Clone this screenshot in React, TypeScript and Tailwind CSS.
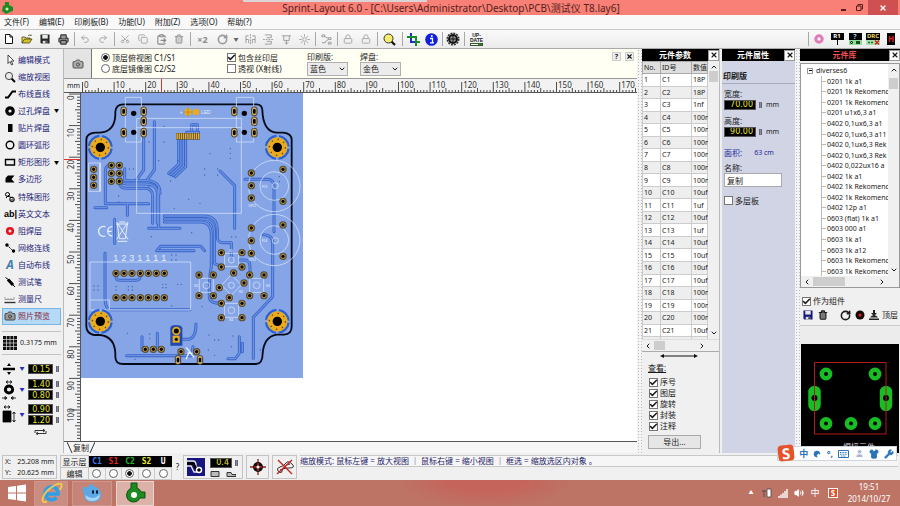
import type { ReactNode } from "react";
import {
  Camera,
  Check,
  ChevronDown,
  ChevronLeft,
  ChevronRight,
  ChevronUp,
  ClipboardPaste,
  Copy,
  Lock,
  Moon,
  Printer,
  Redo2,
  RotateCw,
  Scissors,
  Shirt,
  Trash2,
  Undo2,
  User,
  Volume2,
  Wrench,
  X,
} from "lucide-react";

const parts = [
  ["C1", "18P"],
  ["C2", "18P"],
  ["C3", "1nf"],
  ["C4", "100n"],
  ["C5", "100n"],
  ["C6", "100n"],
  ["C7", "100n"],
  ["C8", "100n"],
  ["C9", "100n"],
  ["C10", "10uf"],
  ["C11", "1uf"],
  ["C12", "10uf"],
  ["C13", "1uf"],
  ["C14", "10uf"],
  ["C15", "10uf"],
  ["C16", "10uf"],
  ["C17", "10uf"],
  ["C18", "100n"],
  ["C19", "100n"],
  ["C20", "100n"],
  ["C21", "10uf"],
  ["C22", "100n"],
];

const library = [
  "0201 1k a1",
  "0201 1k Rekomend",
  "0201 1k Rekomend",
  "0201 u1x6,3 a1",
  "0402 0,1ux6,3 a1",
  "0402 0,1ux6,3 a11",
  "0402 0,1ux6,3 Rek",
  "0402 0,1ux6,3 Rek",
  "0402 0,022ux16 a",
  "0402 1k a1",
  "0402 1k Rekomend",
  "0402 1k Rekomend",
  "0402 12p a1",
  "0603 (flat) 1k a1",
  "0603 000 a1",
  "0603 1k a1",
  "0603 1k a12",
  "0603 1k Rekomend",
  "0603 1k Rekomend",
  "0603 1k Rekomend",
];

const menus = ["文件(F)", "编辑(E)", "印刷板(B)", "功能(U)", "附加(Z)", "选项(O)", "帮助(?)"];

function Glyph({ children }: { children: ReactNode }) {
  return (
    <svg viewBox="0 0 12 12" className="h-3 w-3 shrink-0" fill="none" stroke="#000" strokeWidth="1.4">
      {children}
    </svg>
  );
}

const tools: { name: string; icon: ReactNode; menu?: boolean; active?: boolean }[] = [
  {
    name: "编辑模式",
    icon: <Glyph><path d="M4 1v8.500l2-2 1.500 3.500 1.300-.6L7.400 7H10z" fill="#fff" stroke="#333" strokeWidth=".9" /></Glyph>,
  },
  {
    name: "缩放视图",
    icon: (
      <Glyph>
        <circle cx="5" cy="5" r="3.6" stroke="#444" fill="#e8e8e8" strokeWidth="1" />
        <path d="M7.6 7.6 11 11" strokeWidth="2" />
      </Glyph>
    ),
  },
  { name: "布线直线", icon: <Glyph><path d="M1 9.500H4L8.500 3.500H12" strokeWidth="2" /></Glyph> },
  { name: "过孔焊盘", menu: true, icon: <Glyph><circle cx="6" cy="6" r="3.200" strokeWidth="3.200" /></Glyph> },
  { name: "贴片焊盘", icon: <Glyph><path d="M4 2h4.500v8H4z" fill="#000" stroke="none" /></Glyph> },
  { name: "圆环弧形", icon: <Glyph><circle cx="6" cy="6" r="3.800" /></Glyph> },
  { name: "矩形图形", menu: true, icon: <Glyph><path d="M1.500 3.500h9v5.500h-9z" /></Glyph> },
  { name: "多边形", icon: <Glyph><path d="M1.500 9.500V5L4 2.500h6.500L7.500 6l3 3.500z" fill="#000" stroke="none" /></Glyph> },
  {
    name: "特殊图形",
    icon: (
      <Glyph>
        <circle cx="3.5" cy="3.500" r="2" strokeWidth="1" />
        <path d="M3 5 9 7M2 7l4-4" strokeWidth="1" />
        <circle cx="8" cy="8.500" r="2.300" strokeWidth="1" />
        <path d="M6 9h4" strokeWidth="1" />
      </Glyph>
    ),
  },
  { name: "英文文本", icon: <span className="w-3 whitespace-nowrap font-[Liberation_Sans,sans-serif] text-[9px] font-bold leading-3 text-black">ab|</span> },
  { name: "阻焊层", icon: <Glyph><circle cx="6" cy="6" r="2.800" stroke="#e5111c" strokeWidth="2.600" /></Glyph> },
  {
    name: "网络连线",
    icon: (
      <Glyph>
        <path d="M3 3 9 9" strokeWidth="1" strokeDasharray="2 1" />
        <circle cx="3" cy="3" r="1" fill="#000" />
        <circle cx="9.500" cy="9" r="1" fill="#000" />
      </Glyph>
    ),
  },
  {
    name: "自动布线",
    icon: <span className="w-3 text-center text-[12px] font-bold italic leading-3 text-[#3f7fae]">A</span>,
  },
  {
    name: "测试笔",
    icon: (
      <Glyph>
        <path d="M1.500 1.500 5 4" strokeWidth="1" />
        <path d="M4 3.500 9 9" strokeWidth="3" />
        <path d="M9 9l2 2" strokeWidth="1" />
      </Glyph>
    ),
  },
  {
    name: "测量尺",
    icon: (
      <Glyph>
        <path d="M0.500 9.500h11" stroke="#333" />
        <path d="M1 6.500V4M4 6.500V5M7 6.500V5M10 6.500V4M1 6.500h9" stroke="#888" strokeWidth=".8" />
      </Glyph>
    ),
  },
  { name: "照片预览", active: true, icon: <Camera className="h-3 w-3" stroke="#444" fill="#999" /> },
];

function CheckBox({ label, checked, className }: { label: string; checked?: boolean; className?: string }) {
  return (
    <label className={"flex items-center gap-0.5 whitespace-nowrap " + (className ?? "")}>
      <span className="grid h-[9px] w-[9px] shrink-0">
        <input
          type="checkbox"
          defaultChecked={checked}
          className="peer col-start-1 row-start-1 h-[9px] w-[9px] appearance-none border border-[#777] bg-white"
        />
        <Check className="pointer-events-none invisible z-10 col-start-1 row-start-1 h-[9px] w-[9px] peer-checked:visible" strokeWidth={4} />
      </span>
      {label}
    </label>
  );
}

const radioClass =
  "h-[9px] w-[9px] shrink-0 appearance-none rounded-full border border-[#666] bg-white checked:bg-[radial-gradient(circle,#111_42%,#fff_50%)]";

function PickColor({ id, label, value }: { id: string; label: string; value: string }) {
  return (
    <div className="flex flex-col">
      <label htmlFor={id} className="leading-[11px]">{label}</label>
      <div className="grid w-[41px] items-center">
        <select
          id={id}
          className="col-start-1 row-start-1 h-[14px] appearance-none border border-[#b0b0b0] bg-[#ececec] pl-0.5 leading-3"
        >
          <option>{value}</option>
        </select>
        <ChevronDown className="pointer-events-none col-start-1 row-start-1 mr-0.5 h-2 w-2 justify-self-end" strokeWidth={3} />
      </div>
    </div>
  );
}

function Value({ label, value, className }: { label: string; value: string; className: string }) {
  return (
    <span className="flex items-center gap-[3px]">
      <input
        aria-label={label}
        defaultValue={value}
        className={"h-[10px] border border-[#555] bg-black pr-0.5 text-right font-[DejaVu_Sans,sans-serif] text-[8px] leading-none text-[#e6e62a] " + className}
      />
      <span className="h-[6px] w-[3px] border-x border-[#667] bg-[#889]" />
    </span>
  );
}

function PanelHead({ title, red }: { title: string; red?: boolean }) {
  return (
    <div className="flex h-3 shrink-0 items-center bg-black">
      <h2 className={"flex-1 text-center text-[8px] font-bold leading-none " + (red ? "text-[#f05050]" : "text-white")}>
        {title}
      </h2>
      <button aria-label={"关闭 " + title} className="grid h-[11px] w-[11px] place-items-center border border-[#999] bg-white">
        <X className="h-2 w-2" strokeWidth={3.5} />
      </button>
    </div>
  );
}

function VScroll({ thumb }: { thumb: string }) {
  return (
    <div className="flex w-[11px] shrink-0 flex-col items-center justify-between bg-[#f0f0f0] py-0.5">
      <ChevronUp className="h-2 w-2" strokeWidth={3} />
      <div className={"w-[9px] bg-[#cdcdcd] " + thumb} />
      <div className="flex-1" />
      <ChevronDown className="h-2 w-2" strokeWidth={3} />
    </div>
  );
}

function HScroll({ thumb }: { thumb: string }) {
  return (
    <div className="flex h-[11px] shrink-0 items-center gap-0.5 bg-[#f0f0f0] px-0.5 pr-[13px]">
      <ChevronLeft className="h-2 w-2" strokeWidth={3} />
      <div className={"h-[9px] bg-[#cdcdcd] " + thumb} />
      <div className="flex-1" />
      <ChevronRight className="h-2 w-2" strokeWidth={3} />
    </div>
  );
}

function Splitter() {
  return (
    <div className="w-[5px] shrink-0 bg-[#f4f4f4] bg-[radial-gradient(circle,#bbb_30%,transparent_35%)] bg-[size:3px_3px]" />
  );
}

function Sep() {
  return (
    <div className="flex w-1 justify-center">
      <div className="h-[14px] w-px bg-[#a8a8a8]" />
    </div>
  );
}

function Tool({ name, wide, children }: { name: string; wide?: boolean; children: ReactNode }) {
  return (
    <button aria-label={name} className={"grid h-[18px] place-items-center " + (wide ? "w-[21px]" : "w-[18px]")}>
      {children}
    </button>
  );
}

function Floppy({ color }: { color: string }) {
  return (
    <svg viewBox="0 0 11 11" className="h-[10px] w-[10px]">
      <path d="M0.500 0.500h10v10h-9l-1-1z" fill={color} />
      <path d="M2.500 1h6v4h-6z" fill="#e8e8e8" />
      <path d="M3 7.500h5v3H3z" fill="#ddd" />
      <path d="M6 8h1.500v2H6z" fill="#111" />
    </svg>
  );
}

function ToolBar() {
  const gray = { className: "h-[10px] w-[10px] text-[#aaa]", strokeWidth: 2.4 };
  return (
    <div className="flex h-[19px] shrink-0 items-center border-t border-[#c8c8c8] bg-[linear-gradient(#fafafa,#ebebeb)]">
      <Tool name="新建">
        <svg viewBox="0 0 10 10" className="h-[10px] w-[10px]" fill="#fff" stroke="#111">
          <path d="M1.500.5h4.500L8.500 3v6.500h-7zM6 .5V3h2.500" />
        </svg>
      </Tool>
      <Tool name="打开">
        <svg viewBox="0 0 12 10" className="h-[10px] w-3" stroke="#332f10" strokeWidth=".7">
          <path d="M1 9V3h3l1 1h4v1.500" fill="#eedc4a" />
          <path d="M1 9l2.500-4H11L8.500 9z" fill="#d3bf2b" />
          <path d="M7 2c1-1.500 2.500-1 3 0V.5" fill="none" />
        </svg>
      </Tool>
      <Tool name="保存"><Floppy color="#202a20" /></Tool>
      <Tool name="打印"><Printer className="h-[11px] w-[11px]" fill="#999" stroke="#333" strokeWidth={2.4} /></Tool>
      <Sep />
      <Tool name="撤销"><Undo2 {...gray} /></Tool>
      <Tool name="重做"><Redo2 {...gray} /></Tool>
      <Sep />
      <Tool name="剪切"><Scissors {...gray} className="h-[10px] w-[10px] -rotate-90 text-[#aaa]" /></Tool>
      <Tool name="复制"><Copy {...gray} /></Tool>
      <Tool name="粘贴"><ClipboardPaste {...gray} className="h-[11px] w-[11px] text-[#888]" /></Tool>
      <Tool name="删除"><Trash2 {...gray} className="h-[10px] w-[10px] text-[#999]" fill="#ccc" /></Tool>
      <Sep />
      <Tool name="克隆" wide><span className="text-[9px] font-bold leading-none text-[#8c8c8c]">×2</span></Tool>
      <Tool name="旋转"><RotateCw className="h-[11px] w-[11px] text-[#999]" strokeWidth={3.4} /></Tool>
      <button aria-label="旋转角度" className="w-[10px] text-[5px] leading-none text-[#666]">▼</button>
      <Tool name="水平镜像">
        <svg viewBox="0 0 12 12" className="h-[11px] w-[11px]" fill="none" stroke="#999">
          <path d="M6 0v12" strokeDasharray="2 1" />
          <path d="M4 2H1v8M1 6h3v4M8 2h3v8M11 6H8v4" />
        </svg>
      </Tool>
      <Tool name="垂直镜像">
        <svg viewBox="0 0 12 12" className="h-[11px] w-[11px]" fill="none" stroke="#999">
          <path d="M0 6h12" strokeDasharray="2 1" />
          <path d="M2 1h7v3H4M2 11h7V8H4" />
        </svg>
      </Tool>
      <Tool name="对齐">
        <svg viewBox="0 0 12 12" className="h-[11px] w-[11px]" fill="none" stroke="#999">
          <path d="M1 2h10M3 2v5h6V2M6 7v4M4 9l2 2 2-2" />
        </svg>
      </Tool>
      <Tool name="对准网格">
        <svg viewBox="0 0 12 12" className="h-[11px] w-[11px]" fill="none" stroke="#aaa">
          <circle cx="6" cy="6" r="2" />
          <path d="M6 0v3M6 9v3M0 6h3M9 6h3M2 2l2 2M8 8l2 2M10 2 8 4M4 8l-2 2" />
        </svg>
      </Tool>
      <Sep />
      <Tool name="连线">
        <svg viewBox="0 0 12 12" className="h-[11px] w-[11px]" fill="none" stroke="#999">
          <path d="M1 1h3v2H1zM4 2.500 8 5M8 4h3v2H8zM8 6 4 9M1 9.500h4M8 9h3v2H8z" />
        </svg>
      </Tool>
      <Sep />
      <Tool name="组合"><Lock {...gray} /></Tool>
      <Tool name="取消组合"><Lock {...gray} /></Tool>
      <Sep />
      <Tool name="查找" wide>
        <svg viewBox="0 0 13 13" className="h-[13px] w-[13px]">
          <path d="m8.500 8.500 3.500 3.500" stroke="#111" strokeWidth="2.200" />
          <circle cx="5.500" cy="5.500" r="4.500" fill="#f4ec6a" stroke="#333" />
        </svg>
      </Tool>
      <Sep />
      <Tool name="裁剪">
        <svg viewBox="0 0 13 13" className="h-[13px] w-[13px]" fill="none" strokeWidth="2">
          <path d="M4 0v9h6" stroke="#1b2fd0" />
          <path d="M0 4h9v5" stroke="#178a2a" />
          <path d="M9 9v4M9 9h4" stroke="#178a2a" />
        </svg>
      </Tool>
      <Tool name="信息">
        <svg viewBox="0 0 13 13" className="h-[13px] w-[13px]">
          <circle cx="6.500" cy="6.500" r="6.300" fill="#0d1fe0" />
          <path d="M5 5.500h2.500v4M5 9.800h4" stroke="#fff" strokeWidth="1.300" fill="none" />
          <circle cx="6.800" cy="3" r="1" fill="#fff" />
        </svg>
      </Tool>
      <Sep />
      <Tool name="焊盘">
        <svg viewBox="0 0 14 14" className="h-[14px] w-[14px]">
          <circle cx="7" cy="7" r="5" fill="#111" />
          <circle cx="7" cy="7" r="5.800" fill="none" stroke="#333" strokeWidth="1.500" strokeDasharray="2 1" />
          <circle cx="7" cy="7" r="3" fill="#999" />
          <path d="M7 3v8M3 7h8" stroke="#111" />
        </svg>
      </Tool>
      <Sep />
      <Tool name="更新" wide>
        <span className="flex flex-col text-center font-[Liberation_Sans,sans-serif] text-[5px] font-bold">
          <span className="leading-[5px]">UP-</span>
          <span className="leading-[5px]">DATE</span>
          <span className="h-[3px] border border-[#35562f] bg-[linear-gradient(90deg,#fff_60%,#2f8a2a_60%)]" />
        </span>
      </Tool>
      <div className="flex-1" />
      <Sep />
      <Tool name="焊环">
        <svg viewBox="0 0 10 10" className="h-[10px] w-[10px]">
          <circle cx="5" cy="5" r="3.200" fill="none" stroke="#e07ab8" strokeWidth="3" />
        </svg>
      </Tool>
      <Tool name="元件">
        <span className="flex flex-col items-center">
          <span className="w-[13px] bg-black text-[6px] font-bold leading-[7px] text-white">R1</span>
          <span className="h-[5px] border-l border-dashed border-black" />
        </span>
      </Tool>
      <Tool name="属性">
        <span className="w-[13px] bg-black text-[7px] font-bold leading-[7px] text-[#9fd0ff]">
          ?
          <span className="flex h-[5px] items-center justify-around bg-[#8fdc9a]">
            <span className="h-[3px] w-[3px] rounded-full border border-black" />
            <span className="h-[3px] w-1 bg-[#174d1f]" />
          </span>
        </span>
      </Tool>
      <Tool name="设计检查">
        <span className="w-[14px] bg-black text-[6px] font-bold leading-[7px] text-[#f1d86a]">
          DRC
          <svg viewBox="0 0 14 5" className="block h-[5px] w-[14px] bg-[#a9dfae]">
            <path d="M2 2.500h2M5 2.500h2" stroke="#1d6b28" strokeWidth="1.600" />
            <path d="M9 .5l4 4M13 .5l-4 4" stroke="#d01818" strokeWidth="1.200" />
          </svg>
        </span>
      </Tool>
      <Tool name="宏库">
        <span className="h-3 w-2 bg-black text-[8px] font-bold leading-3 text-[#e02020]">H</span>
      </Tool>
    </div>
  );
}

const TICK = 3.16;

function RulerX() {
  return (
    <svg className="h-full min-w-0 flex-1" stroke="#222">
      {Array.from({ length: 176 }, (_, i) => (
        <path key={i} d={`M${2.5 + i * TICK} 14V${i % 10 === 0 ? 3 : i % 5 === 0 ? 9 : 11}`} strokeWidth=".8" />
      ))}
      {Array.from({ length: 18 }, (_, i) => (
        <text key={i} x={4 + i * 10 * TICK} y="9" fontSize="8" fill="#333" stroke="none" fontFamily="Noto Sans">
          {i * 10}
        </text>
      ))}
      <path d="M81.500 0v14" stroke="#d33" />
    </svg>
  );
}

function RulerY() {
  return (
    <svg className="h-full w-4 shrink-0 bg-[#f2f2f2]" stroke="#222">
      {Array.from({ length: 110 }, (_, i) => (
        <path key={i} d={`M16 ${1 + i * TICK}H${i % 10 === 0 ? 5 : i % 5 === 0 ? 11 : 13}`} strokeWidth=".8" />
      ))}
      {Array.from({ length: 11 }, (_, i) => (
        <text
          key={i}
          transform={`translate(10 ${i === 0 ? 7 : 13 + i * 10 * TICK}) rotate(-90)`}
          fontSize="8"
          fill="#333"
          stroke="none"
          fontFamily="Noto Sans"
        >
          {i * 10}
        </text>
      ))}
      <path d="M0 66.500h16" stroke="#d33" />
    </svg>
  );
}

// copper tracks, three drawing units per screen pixel
const tracks = [
  "M191 140V240L168 272",
  "M223 95V240L200 272",
  "M296 148V222L266 250M303 148V226L272 254M310 148V228L279 257M317 148V230L286 260",
  "M335 122V104H352V122M320 127H356",
  "M420 243 464 287V415",
  "M495 268H560Q582 268 582 290V425",
  "M92 226Q76 226 76 245V341H206M142 344V376M45 353H80",
  "M118 250Q118 282 140 282H196Q232 282 232 310V400",
  "M134 236V270Q134 272 144 272H205Q240 276 240 310M118 262V274Q118 295 140 295H196Q218 295 218 320V400",
  "M236 290V414M206 415H300",
  "M253 378H370Q412 378 412 420V440Q412 458 430 458H454V500M253 387H366Q403 387 403 426V520L423 530",
  "M253 396H360Q394 396 394 434V530Q388 560 388 600V620Q388 640 424 640",
  "M104 388V460M75 490V620Q75 658 92 659H330",
  "M230 482 242 469H362L374 482M230 482H330L342 482",
  "M108 550V560Q108 571 122 571H168Q182 571 182 550",
  "M550 434Q578 434 578 460V620L520 682V805",
  "M480 510H494Q510 510 510 530V554",
  "M140 797H335L339 770M186 740V780M232 730V778M305 748H325Q348 745 348 702",
  "M478 740V790L466 806H444M487 760V785",
];

const vias = [
  [94, 226], [118, 226], [94, 250], [118, 250], [94, 274], [118, 274],
  [41, 238], [41, 262], [41, 286],
  [514, 249], [514, 287], [514, 324], [609, 238], [609, 334],
  [514, 414], [514, 452], [514, 490], [609, 405], [609, 499],
  [108, 550], [132, 550], [156, 550], [181, 550], [205, 550], [229, 550], [253, 550],
  [108, 623], [132, 623], [156, 623], [181, 623], [205, 623], [229, 623], [253, 623],
  [424, 488], [486, 488], [424, 531], [486, 531], [357, 555], [400, 555], [357, 617], [400, 617],
  [509, 555], [552, 555], [509, 617], [552, 617], [424, 640], [486, 640], [424, 683], [486, 683],
  [461, 549], [492, 579], [418, 593], [448, 623],
  [196, 778], [220, 778], [244, 778], [303, 785], [350, 785],
];

const slots = [
  [131, 64], [191, 64], [191, 94], [131, 128], [191, 128],
  [463, 64], [523, 64], [523, 94], [463, 128], [523, 128],
  [294, 810], [360, 810],
];

const dots = [
  [252, 109], [207, 156], [252, 156], [236, 212], [294, 212], [390, 191], [451, 176], [451, 190], [451, 205],
  [374, 237], [374, 255], [413, 237], [413, 255], [148, 237], [160, 237], [207, 290], [272, 273], [116, 318],
  [116, 336], [283, 355], [326, 328], [360, 340], [598, 260], [598, 275], [214, 440], [335, 428], [275, 495],
  [288, 495], [275, 510], [288, 510], [108, 590], [108, 600], [145, 590], [157, 590], [145, 600], [157, 600],
  [248, 583], [258, 583], [248, 593], [258, 593], [294, 583], [304, 583], [42, 588], [54, 588], [42, 600], [54, 600],
  [275, 648], [366, 650], [142, 730], [209, 732], [209, 745], [387, 735], [404, 750], [416, 750], [459, 738],
  [404, 796], [454, 770], [541, 780], [455, 441], [468, 441], [385, 780], [165, 808],
];

const holes = [[61, 172], [592, 172], [61, 694], [592, 694]];

function Board() {
  return (
    <svg viewBox="3 9 666 855" className="block h-[285px] w-[222px] bg-[#86a5e6]" fill="none">
      <g stroke="#3866cb" strokeWidth="9" strokeLinecap="round" strokeLinejoin="round">
        {tracks.map((d) => <path key={d} d={d} />)}
      </g>
      <g stroke="#6b90df" strokeWidth="4" strokeLinecap="round" strokeLinejoin="round">
        {tracks.map((d) => <path key={d} d={d} />)}
      </g>
      {dots.map(([x, y]) => <circle key={x + "-" + y} cx={x} cy={y} r="2" fill="#3d5faf" />)}
      <path
        d="M130 43H530Q546 43 547 60Q549 125 590 128H610Q635 130 635 150V710Q635 732 612 734H590Q552 740 548 790Q548 822 528 822H130Q106 822 106 800V790Q104 740 60 735H42Q19 730 19 708V150Q19 130 45 128H60Q104 125 106 75V65Q108 43 130 43Z"
        stroke="#050a18"
        strokeWidth="5.500"
      />
      <g stroke="#cfdcf8" strokeWidth="2.500">
        <path d="M136 22H184V156H136ZM469 22H521V156H469ZM170 85H484V370H170ZM170 113H484M26 219H62V304H26Z" />
        <path d="M60 219V304" strokeWidth="6" />
        <path d="M30 516H332V660H30ZM30 630H88V660" />
        <circle cx="583" cy="288" r="77" />
        <circle cx="583" cy="288" r="43" />
        <circle cx="586" cy="287" r="9" />
        <circle cx="583" cy="450" r="77" />
        <circle cx="583" cy="450" r="43" />
        <circle cx="586" cy="452" r="9" />
        <path d="M434 490H476V530H434ZM358 565H400V607H358ZM509 565H551V607H509ZM434 640H476V682H434ZM454 554 484 585 454 616 425 585Z" />
        <circle cx="454" cy="510" r="9" />
        <circle cx="379" cy="586" r="10" />
        <circle cx="530" cy="586" r="10" />
        <circle cx="454" cy="661" r="10" />
        <circle cx="454" cy="586" r="9" />
      </g>
      <g stroke="#e8effc" strokeWidth="4">
        <path d="M76 410A15 15 0 1 0 76 438M97 410A14 14 0 1 0 97 438M82 424H95" />
        <path d="M108 402H145M112 402 118 446H136L142 402M110 396 144 448M144 396 110 448M118 396H136M112 454H142" strokeWidth="3" />
        <path d="M318 772 334 790M318 808 328 785 342 802M322 790H338" />
      </g>
      <g fill="#e8effc" fontFamily="Liberation Sans">
        {["1", "2", "3", "1", "1", "1", "1"].map((n, i) => (
          <text key={i} x={100 + i * 24} y="513" fontSize="27">{n}</text>
        ))}
        <text x="364" y="72" fontSize="14">LED</text>
        <text x="299" y="71" fontSize="14">+</text>
        <text x="505" y="350" fontSize="12">VR2</text>
        <text x="505" y="513" fontSize="12">VR1</text>
        <text x="546" y="293" fontSize="12">R3</text>
        <text x="546" y="456" fontSize="12">R4</text>
        <text x="446" y="486" fontSize="11">S1</text>
        <text x="342" y="590" fontSize="11">S2</text>
        <text x="557" y="590" fontSize="11">S3</text>
        <text x="476" y="610" fontSize="11">S5</text>
        <text x="446" y="694" fontSize="11">S4</text>
      </g>
      {holes.map(([x, y]) => (
        <g key={x + "-" + y}>
          <circle cx={x} cy={y} r="34" stroke="#2c60cf" strokeWidth="7" strokeDasharray="46 7.400" strokeDashoffset="-3.700" />
          <circle cx={x} cy={y} r="21" stroke="#e9aa1e" strokeWidth="19" />
          <circle cx={x} cy={y} r="24" stroke="#5c4314" strokeWidth="4" strokeDasharray="4 14.850" />
          <circle cx={x} cy={y} r="14" fill="#000" />
        </g>
      ))}
      {vias.map(([x, y]) => (
        <g key={x + "-" + y}>
          <circle cx={x} cy={y} r="9" fill="#060606" stroke="#54503a" strokeWidth="4" />
          <circle cx={x} cy={y} r="6.500" stroke="#c69a45" strokeWidth="3" />
        </g>
      ))}
      {slots.map(([x, y]) => (
        <g key={x + "-" + y}>
          <rect x={x - 8} y={y - 13} width="16" height="26" rx="6" fill="#d9b264" stroke="#41402f" strokeWidth="3" />
          <rect x={x - 4} y={y - 7} width="8" height="14" rx="3" fill="#000" />
        </g>
      ))}
      <g fill="#050505">
        <circle cx="161" cy="70" r="8" />
        <circle cx="161" cy="127" r="8" />
        <circle cx="493" cy="70" r="8" />
        <circle cx="493" cy="127" r="8" />
      </g>
      <g fill="#e9aa1e">
        <circle cx="324" cy="66" r="11" />
        <circle cx="348" cy="66" r="10" />
      </g>
      <path d="M324 52v28M310 66h28" stroke="#b9851a" strokeWidth="2" />
      <path d="M288 139H360" stroke="#3c3b33" strokeWidth="20" />
      <path d="M289 139H360" stroke="#e0ad3a" strokeWidth="18" strokeDasharray="4.500 2" />
      <path d="M271 767V715Q271 705 288 705T307 715V767Z" fill="#2149a9" />
      <circle cx="289" cy="723" r="10" fill="#000" stroke="#e9aa1e" strokeWidth="5" />
      <path d="M278 737h21v21h-21z" fill="#e9aa1e" />
      <circle cx="289" cy="748" r="5" fill="#000" />
    </svg>
  );
}

function SideBar() {
  return (
    <aside className="flex w-16 shrink-0 flex-col border-r border-[#bbb] px-0.5 pt-0.5">
      <nav className="flex flex-1 flex-col">
        {tools.map((t) => (
          <button
            key={t.name}
            className={
              "flex flex-1 items-center gap-[2px] border px-px leading-none " +
              (t.active ? "border-[#7ab6e4] bg-[#b5daf5] text-[#8a1c40]" : "border-transparent text-[#1d1c7a]")
            }
          >
            <span className="flex w-3 justify-center">{t.icon}</span>
            <span className="flex-1 text-left">{t.name}</span>
            {t.menu && <span className="text-[5px] text-black">▼</span>}
          </button>
        ))}
      </nav>
      <div className="mt-1.5 flex h-6 shrink-0 items-center gap-0.5 border-y border-[#c4c4c4]">
        <svg viewBox="0 0 14 14" className="mx-px h-[14px] w-[14px]">
          <path d="M0 0h14v14H0z" fill="#111" />
          <path d="M0 3.500h14M0 7h14M0 10.500h14M3.500 0v14M7 0v14M10.500 0v14" stroke="#ddd" strokeWidth=".7" />
        </svg>
        <span className="whitespace-nowrap text-[7px]">0.3175 mm</span>
      </div>
      <div className="flex h-[98px] shrink-0 flex-col gap-1 pt-2">
        <div className="flex items-center">
          <svg viewBox="0 0 14 12" className="h-3 w-[14px] shrink-0">
            <path d="M1 6h12" stroke="#000" strokeWidth="2.500" />
            <path d="M7 0 5 3h4zM7 12 5 9h4z" fill="#000" />
          </svg>
          <span className="flex-1 text-center text-[5px] text-[#2a2ac0]">▼</span>
          <Value label="线宽" value="0.15" className="w-[25px]" />
          <span className="w-0.5" />
        </div>
        <div className="flex items-center">
          <svg viewBox="0 0 14 20" className="h-5 w-[14px] shrink-0" fill="none" stroke="#000">
            <path d="M4 2h6M4 2l2-1.500M4 2l2 1.500M10 2 8 .5M10 2 8 3.500" strokeWidth=".8" />
            <circle cx="7" cy="9.500" r="3.600" strokeWidth="3" />
            <path d="M0 18h5M9 18h5M5 18l-2-1.500v3zM9 18l2-1.500v3z" strokeWidth=".8" />
          </svg>
          <span className="flex-1 text-center text-[5px] text-[#2a2ac0]">▼</span>
          <span className="flex flex-col gap-px">
            <Value label="焊盘外径" value="1.40" className="w-[25px]" />
            <Value label="焊盘孔径" value="0.80" className="w-[25px]" />
          </span>
          <span className="w-0.5" />
        </div>
        <div className="flex items-center">
          <svg viewBox="0 0 14 20" className="h-5 w-[14px] shrink-0" fill="none" stroke="#000" strokeWidth=".8">
            <path d="M2 2h6M2 2l2-1.500M2 2l2 1.500M8 2 6 .5M8 2 6 3.500M12 7v10M12 7l-1.500 2M12 7l1.500 2M12 17l-1.500-2M12 17l1.500-2" />
            <path d="M1 6h8v11H1z" fill="#000" />
          </svg>
          <span className="flex-1 text-center text-[5px] text-[#2a2ac0]">▼</span>
          <span className="flex flex-col gap-px">
            <Value label="贴片宽" value="0.90" className="w-[25px]" />
            <Value label="贴片高" value="1.20" className="w-[25px]" />
          </span>
          <span className="w-0.5" />
        </div>
        <button aria-label="交换" className="mr-[14px] self-end">
          <svg viewBox="0 0 13 6" className="h-1.5 w-[13px]" fill="none" stroke="#222">
            <path d="M1 4V1.500h9M9 0l2 1.500L9 3M12 2v2.500H3M4 3 2 4.500 4 6" strokeWidth=".9" />
          </svg>
        </button>
      </div>
    </aside>
  );
}

function Workspace() {
  return (
    <main className="flex min-w-0 flex-1 flex-col">
      <div className="flex h-[30px] shrink-0 border-b border-[#999] bg-[#fffff4]">
        <div className="grid w-7 place-items-center border-r border-[#777] bg-[#e4e4e4]">
          <Camera className="h-3 w-3" stroke="#555" fill="#aaa" />
        </div>
        <div className="flex flex-1 pl-[9px] pt-1">
          <div className="flex w-[126px] flex-col gap-0.5 leading-[9px]">
            <label className="flex items-center gap-0.5"><input type="radio" name="side" defaultChecked className={radioClass} />顶层俯视图 C1/S1</label>
            <label className="flex items-center gap-0.5"><input type="radio" name="side" className={radioClass} />底层镜像图 C2/S2</label>
          </div>
          <div className="flex w-20 flex-col gap-0.5 leading-[9px]">
            <CheckBox label="包含丝印层" checked />
            <CheckBox label="透视 (X射线)" />
          </div>
          <div className="-mt-0.5 flex gap-3">
            <PickColor id="board-color" label="印刷版:" value="蓝色" />
            <PickColor id="pad-color" label="焊盘:" value="金色" />
          </div>
        </div>
        <div className="flex gap-1 p-[3px]">
          <button aria-label="帮助" className="h-[9px] w-[9px] border border-[#ccc] bg-[#eee] text-[7px] font-bold leading-[7px]">?</button>
          <button aria-label="关闭" className="grid h-[9px] w-[9px] place-items-center border border-[#ccc] bg-[#eee]">
            <X className="h-[7px] w-[7px]" strokeWidth={4} />
          </button>
        </div>
      </div>
      <div className="flex h-[14px] shrink-0 border-b border-[#555] bg-[#f2f2f2]">
        <span className="w-4 shrink-0 pl-[3px] text-[7px] leading-[14px]">mm</span>
        <RulerX />
      </div>
      <div className="flex min-h-0 flex-1 overflow-hidden">
        <RulerY />
        <div className="min-w-0 flex-1 overflow-hidden border-l border-[#555] bg-white">
          <Board />
        </div>
      </div>
      <div className="flex h-3 shrink-0 border-t border-[#555] bg-[#f6f6f6] pl-[3px]">
        <svg viewBox="0 0 6 11" className="h-[11px] w-1.5"><path d="M0 0l5 11" stroke="#333" /></svg>
        <button className="leading-[11px]">复制</button>
        <svg viewBox="0 0 6 11" className="h-[11px] w-1.5"><path d="M6 0 1 11" stroke="#333" /></svg>
      </div>
    </main>
  );
}

function PartsPanel() {
  return (
    <section className="flex w-[78px] shrink-0 flex-col border-r border-[#bbb]">
      <PanelHead title="元件参数" />
      <div className="flex min-h-0 flex-1 border-b border-[#ddd]">
        <div className="min-w-0 flex-1 overflow-hidden bg-white">
          <table className="h-[289px] w-full table-fixed border-collapse text-left text-[7px] leading-[11px]">
            <thead>
              <tr className="bg-[#dedede]">
                <th className="w-[18px] border border-[#aaa] p-0 pl-px font-normal">No.</th>
                <th className="w-[31px] border border-[#aaa] p-0 pl-px font-normal">ID号</th>
                <th className="whitespace-nowrap border border-[#aaa] p-0 pl-px font-normal">数值</th>
              </tr>
            </thead>
            <tbody>
              {parts.map(([id, value], i) => (
                <tr key={id} className="even:bg-[#eee]">
                  <td className="border border-[#ccc] p-0 pl-px">{i + 1}</td>
                  <td className="border border-[#ccc] p-0 pl-px">{id}</td>
                  <td className="border border-[#ccc] p-0 pl-px">{value}</td>
                </tr>
              ))}
            </tbody>
          </table>
        </div>
        <VScroll thumb="h-[11px]" />
      </div>
      <HScroll thumb="w-[11px]" />
      <div className="flex h-[102px] shrink-0 flex-col border-t border-[#aaa] pl-1.5 pr-[18px]">
        <svg viewBox="0 0 38 8" className="ml-3 h-2 w-[38px]">
          <path d="M2 4h34" stroke="#111" />
          <path d="M0 4l4-2v4zM38 4l-4-2v4z" fill="#111" />
        </svg>
        <span className="mb-1 mt-0.5 leading-[11px] underline">查看:</span>
        <div className="flex flex-col gap-px pl-px leading-[10px]">
          {["序号", "图层", "旋转", "封装", "注释"].map((name) => <CheckBox key={name} label={name} checked />)}
        </div>
        <button className="mt-1 h-[14px] border border-[#aaa] bg-[#e6e6e6] leading-3">导出...</button>
      </div>
    </section>
  );
}

function PropsPanel() {
  return (
    <section className="ml-0.5 flex w-[73px] shrink-0 flex-col bg-[#d0d4e4]">
      <PanelHead title="元件属性" />
      <h3 className="mt-[9px] border-b border-[#a6abc0] pb-0.5 pl-px font-bold leading-[11px]">印刷版</h3>
      <div className="flex flex-col items-start pl-0.5 pt-1 leading-[11px]">
        <span>宽度:</span>
        <span className="flex items-center gap-1 text-[7px]"><Value label="宽度" value="70.00" className="w-8" />mm</span>
        <span className="mt-[5px]">高度:</span>
        <span className="flex items-center gap-1 text-[7px]"><Value label="高度" value="90.00" className="w-8" />mm</span>
        <span className="mt-2.5 flex gap-3 text-[#26269a]"><span>面积:</span><span className="text-[7px]">63 cm</span></span>
        <label htmlFor="board-name" className="mt-1">名称:</label>
        <input id="board-name" defaultValue="复制" className="h-[14px] w-[58px] border border-[#aaa] bg-white px-0.5 leading-3" />
        <CheckBox label="多层板" className="mt-2" />
      </div>
    </section>
  );
}

function LibraryPanel() {
  return (
    <section className="flex w-[100px] shrink-0 flex-col">
      <PanelHead title="元件库" red />
      <div className="mt-0.5 flex min-h-0 flex-1 border border-b-0 border-[#999] bg-white">
        <div className="min-w-0 flex-1 overflow-hidden">
          <div className="flex h-[223px] flex-col pl-1.5 pt-px text-[7px]">
            <span className="flex h-[11px] shrink-0 items-center gap-[3px] leading-none">
              <span className="grid h-1.5 w-1.5 place-items-center border border-[#999]"><span className="h-px w-[3px] bg-black" /></span>
              diverses6
            </span>
            <ul className="ml-[14px] flex flex-1 flex-col border-l border-[#bbb]">
              {library.map((name, i) => (
                <li key={i} className="flex flex-1 items-center gap-px whitespace-nowrap leading-none">
                  <span className="h-px w-1 shrink-0 bg-[#bbb]" />
                  {name}
                </li>
              ))}
            </ul>
          </div>
        </div>
        <VScroll thumb="mt-1 h-[11px]" />
      </div>
      <div className="border border-t-0 border-[#999]"><HScroll thumb="w-8" /></div>
      <CheckBox label="作为组件" checked className="ml-0.5 mt-2 leading-[10px]" />
      <div className="mt-px flex h-4 shrink-0 items-center whitespace-nowrap pl-[3px]">
        <button aria-label="保存元件"><Floppy color="#16167c" /></button>
        <button aria-label="删除元件" className="ml-[5px]"><Trash2 className="h-[10px] w-[10px]" fill="#777" strokeWidth={2.6} /></button>
        <button aria-label="旋转元件" className="ml-3"><RotateCw className="h-[11px] w-[11px]" strokeWidth={3.4} /></button>
        <button aria-label="焊盘颜色" className="ml-1">
          <svg viewBox="0 0 10 10" className="h-[10px] w-[10px]"><circle cx="5" cy="5" r="4.500" fill="#150505" /><circle cx="5" cy="5" r="1.500" fill="#e02020" /></svg>
        </button>
        <button className="ml-1 flex items-center gap-[3px]">
          <svg viewBox="0 0 10 10" className="h-[10px] w-[10px]"><path d="M4 0h2v3h2L5 6 2 3h2zM3 5.500h4l2 2H1zM0 8.500h10V10H0z" fill="#222" /></svg>
          顶层
        </button>
      </div>
      <div className="mt-0.5 h-[19px] shrink-0 border-t border-[#ccc] bg-[#ececec]" />
      <div className="mx-px h-[109px] shrink-0 bg-black">
        <svg viewBox="0 0 98 109" className="h-full w-full" fill="none">
          <g stroke="#17bd22" strokeWidth="4.400">
            <circle cx="25" cy="30" r="4.200" />
            <circle cx="74" cy="30" r="4.200" />
            <circle cx="25" cy="79.500" r="4.200" />
            <circle cx="50" cy="79.500" r="4.200" />
            <circle cx="74" cy="79.500" r="4.200" />
          </g>
          <path d="M13.500 48v13M85 48v13" stroke="#17bd22" strokeWidth="12.500" strokeLinecap="round" />
          <circle cx="13.500" cy="54" r="3" fill="#000" />
          <circle cx="85" cy="54" r="3" fill="#000" />
          <path d="M13.500 18.500H85V90H13.500Z" stroke="#b01c1c" />
          <text x="58" y="106" fontSize="8" fill="#ddd" textAnchor="middle">焊接元件</text>
        </svg>
      </div>
    </section>
  );
}

const layers = [
  ["C1", "text-[#3d7df0]"],
  ["S1", "text-[#e02828]"],
  ["C2", "text-[#28b432]"],
  ["S2", "text-[#ecec2c]"],
  ["U", "text-white"],
];

function StatusBar() {
  return (
    <footer className="flex h-[27px] shrink-0 items-stretch gap-[3px] bg-[#f0f0f0] px-0.5 pb-px pt-0.5">
      <div className="flex w-[55px] flex-col justify-around border border-[#c4c4c4] px-0.5 text-[7px] leading-[11px]">
        <span className="flex justify-between"><span>X:</span><span>25.208 mm</span></span>
        <span className="flex justify-between"><span>Y:</span><span>20.625 mm</span></span>
      </div>
      <table className="w-[112px] table-fixed border-collapse text-center leading-[11px]">
        <tbody>
          <tr>
            <th className="w-7 border border-[#c4c4c4] p-0 font-normal">显示层</th>
            {layers.map(([name, color]) => (
              <th key={name} className={"bg-black p-0 font-[DejaVu_Sans_Mono,monospace] text-[8px] font-bold " + color}>{name}</th>
            ))}
          </tr>
          <tr>
            <th className="border border-[#c4c4c4] p-0 font-normal">编辑</th>
            {layers.map(([name]) => (
              <td key={name} className="border border-[#ccc] p-0">
                <input type="radio" name="layer" aria-label={name} defaultChecked={name === "C2"} className={radioClass + " mx-auto block"} />
              </td>
            ))}
          </tr>
        </tbody>
      </table>
      <button className="w-[5px] text-[8px]">?</button>
      <div className="flex w-[60px] items-center gap-[5px] border border-[#c4c4c4] px-[3px]">
        <svg viewBox="0 0 18 18" className="h-[18px] w-[18px] shrink-0" fill="none">
          <path d="M0 0h18v18H0z" fill="#16167c" />
          <path d="M0 3h6q3 0 3 4v1l2 3M0 8h4l3 6h3" stroke="#e8e8e8" strokeWidth="1.400" />
          <path d="M0 5.500h6l4 6" stroke="#000" strokeWidth="2.500" />
          <circle cx="12" cy="12" r="2.500" fill="#000" stroke="#fff" strokeWidth="1.400" />
        </svg>
        <div className="flex flex-col gap-[3px]">
          <Value label="间距" value="0.4" className="w-[22px]" />
          <svg viewBox="0 0 26 6" className="h-1.5 w-[26px]">
            <path d="M1 .5h8v5H1zM17 5.500V1.500h4l1 2h4v2z" fill="#bbb" stroke="#333" />
          </svg>
        </div>
      </div>
      <button aria-label="原点" className="grid w-[23px] place-items-center border border-[#c4c4c4]">
        <svg viewBox="0 0 16 16" className="h-4 w-4" fill="none">
          <path d="M8 0v16M0 8h16" stroke="#8c2020" strokeWidth="1.300" />
          <circle cx="8" cy="8" r="5" fill="#111" />
          <path d="M8 4v8M4 8h8" stroke="#c02020" strokeWidth="1.600" />
          <circle cx="8" cy="8" r="1.600" fill="#f0f0f0" />
        </svg>
      </button>
      <button aria-label="关闭连线" className="grid w-[25px] place-items-center border border-[#c4c4c4]">
        <svg viewBox="0 0 18 16" className="h-4 w-[18px]" fill="none">
          <path d="M2 12q-2-3 2-4t6-4 6 1-3 4-7 3-4 0M4 11q3 0 5-3t5-3" stroke="#333" />
          <path d="M2 1l14 14M16 1 1 15" stroke="#c82020" strokeWidth="1.400" />
        </svg>
      </button>
      <p className="h-3 flex-1 whitespace-nowrap border-y border-[#c8c8c8] bg-[#f6f6f6] leading-[10px] text-[#1d1c6a]">
        缩放模式: 鼠标左键 = 放大视图 ｜ 鼠标右键 = 缩小视图 ｜ 框选 = 缩放选区内对象 。
      </p>
    </footer>
  );
}

function TaskBar() {
  return (
    <div className="flex h-[26px] shrink-0 items-center bg-[#bd7465] bg-[radial-gradient(ellipse_90px_28px_at_54%_0%,#c5645b_40%,transparent)] text-white">
      <button aria-label="开始" className="grid w-[34px] place-items-center">
        <svg viewBox="0 0 18 18" className="h-[18px] w-[18px]" fill="#fff">
          <path d="M0 3l8-1v6.500H0zM9 1.800 18 .5v8H9zM0 9.500h8V16l-8-1zM9 9.500h9v8l-9-1.300z" />
        </svg>
      </button>
      <button aria-label="浏览器" className="grid h-[25px] w-[34px] place-items-center border border-[#cf958a] bg-[#ca8d81]">
        <svg viewBox="0 0 26 22" className="h-[22px] w-[26px]" fill="none">
          <path d="M8 12H20A6.500 6.500 0 1 0 18.500 15.500" stroke="#2d9ee8" strokeWidth="3.600" />
          <path d="M9 19.500q-6 2-4-4T14 5t9-3q2 2-1.500 6" stroke="#f0cd48" strokeWidth="1.800" />
        </svg>
      </button>
      <button aria-label="迅雷" className="ml-1 mr-1 grid h-[25px] w-10 place-items-center border border-[#cf958a] bg-[#c68377]">
        <svg viewBox="0 0 22 20" className="h-5 w-[22px]">
          <path d="M2 4q4 1 6-1l3-3q0 3 4 4 5 2 5 7.500Q20 19 11.500 19T3 11Q1 8 2 4z" fill="#5ba9e4" />
          <path d="M4.500 12q3 3 7 3t7.500-4q0 7-7.500 7T4.500 12z" fill="#a5d5f6" />
          <ellipse cx="12" cy="9" rx="1" ry="2" fill="#112" />
          <ellipse cx="16" cy="9" rx="1" ry="2" fill="#112" />
        </svg>
      </button>
      <button aria-label="Sprint-Layout" className="grid h-[25px] w-[38px] place-items-center border border-[#ecd2cc] bg-[#dcb1a8]">
        <svg viewBox="0 0 22 22" className="h-[22px] w-[22px]">
          <path d="M7 1h6v5q3 1 4 4h4v6h-5q-2 4-6 4-7 0-7.500-7Q3 8 7 6z" fill="#1d8a22" stroke="#0c5312" />
          <circle cx="10" cy="13" r="3" fill="#fff" />
        </svg>
      </button>
      <div className="flex-1" />
      <div className="flex items-center">
        <span className="w-4 text-center text-[5px]">▲</span>
        <span className="grid w-4 place-items-center">
          <svg viewBox="0 0 10 10" className="h-[10px] w-[10px]"><path d="M5 1h4v8H5zM0 3h4M2 2v7" fill="#fff" stroke="#444" strokeWidth=".8" /></svg>
        </span>
        <span className="grid w-4 place-items-center">
          <svg viewBox="0 0 10 10" className="h-[10px] w-[10px]"><path d="M1 10V8M3 10V6.500M5 10V5M7 10V3M9 10V1" stroke="#fff" strokeWidth="1.400" /></svg>
        </span>
        <Volume2 className="mx-[3px] h-[10px] w-[10px]" fill="#fff" />
        <span className="w-4 text-center text-[9px]">中</span>
        <span className="ml-[5px] grid h-[10px] w-[10px] place-items-center border border-white bg-[#e2532c] text-[8px] font-bold leading-none">S</span>
      </div>
      <time className="w-[62px] text-center text-[8px] leading-3">
        19:51
        <br />
        2014/10/27
      </time>
    </div>
  );
}

function InputMethodBar() {
  return (
    <div className="absolute bottom-[45px] right-[3px] flex h-[15px] w-[120px] items-center justify-between border border-[#cdd6de] bg-white pr-0.5 text-[#2a73b8]">
      <span className="-mt-0.5 grid h-4 w-4 -rotate-6 place-items-center rounded-sm bg-[#e5532c] text-[15px] font-bold leading-none text-white">S</span>
      <span className="text-[9px] font-bold leading-none">中</span>
      <Moon className="h-2 w-2 rotate-90" fill="currentColor" />
      <span className="text-[9px] font-bold leading-none">°,</span>
      <svg viewBox="0 0 11 8" className="h-2 w-[11px]" fill="none" stroke="currentColor">
        <path d="M.5.5h10v7H.5z" />
        <path d="M2 2.500h7M2 4.200h7M3 6h5" strokeDasharray="1 .6" />
      </svg>
      <User className="h-[9px] w-[9px] text-[#a8b6d0]" fill="currentColor" />
      <Shirt className="h-[10px] w-[10px]" fill="currentColor" />
      <Wrench className="h-[10px] w-[10px]" fill="currentColor" />
    </div>
  );
}

export default function App() {
  return (
    <div className="relative flex h-screen flex-col overflow-hidden bg-[#f0f0f0] font-[Noto_Sans,Noto_Sans_CJK_SC,sans-serif] text-[8px] text-[#1a1a1a]">
      <header className="flex h-[15px] shrink-0 items-center bg-[#f88076]">
        <svg viewBox="0 0 12 12" className="ml-px h-3 w-3">
          <path d="M4 0h4v3l4 2v4l-3 1-4 2-4-3 1-5 2-1z" fill="#1d8a22" />
          <circle cx="6" cy="7" r="1.500" fill="#c8f0c8" />
        </svg>
        <h1 className="min-w-0 flex-1 whitespace-nowrap pl-[54px] text-center text-[10px] leading-none text-[#54201c]">
          Sprint-Layout 6.0 - [C:\Users\Administrator\Desktop\PCB\测试仪 T8.lay6]
        </h1>
        <button aria-label="最小化" className="grid h-full w-4 place-items-center"><span className="mt-1 h-0.5 w-[5px] bg-[#5a1e1a]" /></button>
        <button aria-label="还原" className="grid h-full w-[17px] place-items-center">
          <svg viewBox="0 0 7 7" className="h-[7px] w-[7px]" fill="none" stroke="#5a1e1a"><path d="M2 2V.5h4.500V5H5M.5 2h4.500v4.500H.5z" /></svg>
        </button>
        <button aria-label="关闭" className="mr-0.5 grid h-[15px] w-[30px] place-items-center bg-[#cf5050] text-white"><X className="h-2 w-2" strokeWidth={4} /></button>
      </header>
      <div className="absolute left-[27%] top-0 h-0.5 w-[184px] bg-[#dcd3d6]" />
      <nav className="flex h-[14px] shrink-0 items-center gap-[10px] bg-[#f9f9f9] pl-1">
        {menus.map((m) => <button key={m} className="leading-none">{m}</button>)}
      </nav>
      <ToolBar />
      <div className="flex min-h-0 flex-1 border-t border-[#aaa]">
        <SideBar />
        <Workspace />
        <Splitter />
        <PartsPanel />
        <PropsPanel />
        <Splitter />
        <LibraryPanel />
      </div>
      <StatusBar />
      <TaskBar />
      <InputMethodBar />
    </div>
  );
}
